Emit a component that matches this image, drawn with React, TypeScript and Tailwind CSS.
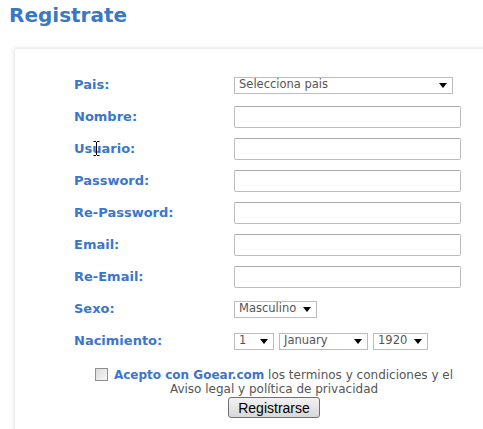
import React from "react";

const labelCls = "text-[13px] font-bold text-[#3b76cc]";
const inputCls = "h-[22px] w-[227px] border border-[#b9bcc0] border-t-[#a6a9ad] bg-white rounded-[2px]";

function Select({ value, width, height = 17 }: { value: string; width: number; height?: number }) {
  return (
    <div
      className="flex items-center justify-between border border-[#b9bcc0] bg-white pl-[4px] pr-[5px] text-[11.5px] text-[#555] leading-none"
      style={{ width, height }}
    >
      <span>{value}</span>
      <svg width="8" height="5" viewBox="0 0 8 5"><path d="M0 0h8L4 5z" fill="#000" /></svg>
    </div>
  );
}

export default function App() {
  const fields = ["Nombre:", "Usuario:", "Password:", "Re-Password:", "Email:", "Re-Email:"];
  return (
    <div className="w-[483px] h-[429px] overflow-hidden bg-white" style={{ fontFamily: '"DejaVu Sans", Verdana, sans-serif' }}>
      <h1 className="pl-[9px] pt-[3px] text-[20px] font-bold text-[#3a78c3] leading-[24px]">Registrate</h1>
      <div className="ml-[15px] mt-[22px] w-[518px] bg-white shadow-[-1px_-1px_4px_rgba(0,0,0,0.12)] pt-[20px] pl-[59px]">
        <div className="grid grid-cols-[160px_1fr] auto-rows-[32px] items-center">
          <span className={labelCls}>Pais:</span>
          <Select value="Selecciona pais" width={219} />
          {fields.map((f) => (
            <React.Fragment key={f}>
              <span className={`${labelCls} relative`}>
                {f}
                {f === "Usuario:" && (
                  <svg className="absolute left-[19px] top-[2px]" width="7" height="15" viewBox="0 0 7 15">
                    <path d="M0.5 0.5h2.5M4 0.5h2.5M3.5 1v13M0.5 14.5h2.5M4 14.5h2.5" stroke="#000" fill="none" />
                  </svg>
                )}
              </span>
              <div className={inputCls} />
            </React.Fragment>
          ))}
          <span className={labelCls}>Sexo:</span>
          <Select value="Masculino" width={83} />
          <span className={labelCls}>Nacimiento:</span>
          <div className="flex gap-[5px]">
            <Select value="1" width={40} />
            <Select value="January" width={89} />
            <Select value="1920" width={55} />
          </div>
        </div>
        <div className="-ml-[59px] mt-[11px] text-center text-[12px] leading-[14px] text-[#555]">
          <div className="flex justify-center items-start">
            <span className="mr-[6px] inline-block h-[13px] w-[13px] border border-[#8f8f8f] bg-gradient-to-br from-[#dcdcdc] to-[#f6f6f6]" />
            <span>
              <b className="text-[#3b76cc]">Acepto con Goear.com</b> los terminos y condiciones y el
            </span>
          </div>
          <div>Aviso legal y política de privacidad</div>
          <button
            className="mt-[1px] h-[21px] w-[92px] rounded-[3px] border border-[#707070] bg-gradient-to-b from-[#f2f2f2] to-[#d8d8d8] text-[14px] text-black leading-none"
            style={{ fontFamily: '"Liberation Sans", Arial, sans-serif' }}
          >
            Registrarse
          </button>
        </div>
        <div className="h-[20px]" />
      </div>
    </div>
  );
}
